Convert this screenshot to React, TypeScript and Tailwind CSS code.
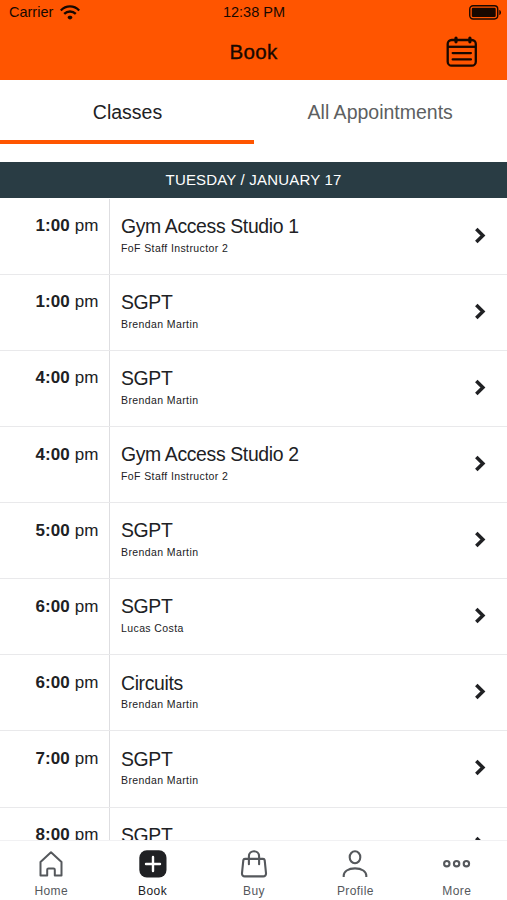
import React from "react";

const classes = [
  { time: "1:00", name: "Gym Access Studio 1", staff: "FoF Staff Instructor 2" },
  { time: "1:00", name: "SGPT", staff: "Brendan Martin" },
  { time: "4:00", name: "SGPT", staff: "Brendan Martin" },
  { time: "4:00", name: "Gym Access Studio 2", staff: "FoF Staff Instructor 2" },
  { time: "5:00", name: "SGPT", staff: "Brendan Martin" },
  { time: "6:00", name: "SGPT", staff: "Lucas Costa" },
  { time: "6:00", name: "Circuits", staff: "Brendan Martin" },
  { time: "7:00", name: "SGPT", staff: "Brendan Martin" },
  { time: "8:00", name: "SGPT", staff: "Brendan Martin" },
];

function WifiIcon() {
  return (
    <svg width="20" height="15" viewBox="0 0 20 15" fill="none" stroke="currentColor" strokeWidth="2.3">
      <path d="M.8 5.5C6 .1 14 .1 19.2 5.5" />
      <path d="M4.2 8.9c3.3-3.2 8.3-3.2 11.6 0" />
      <path d="M7.6 12.2c.7-1.9 4.1-1.9 4.8 0 .2.8-1.5 2.3-2.4 2.3s-2.6-1.5-2.4-2.3Z" fill="currentColor" stroke="none" />
    </svg>
  );
}

function BatteryIcon() {
  return (
    <svg width="33" height="15" viewBox="0 0 33 15" fill="none">
      <rect x=".75" y=".75" width="28" height="13.2" rx="3.4" stroke="currentColor" strokeWidth="1.4" />
      <rect x="2.8" y="2.8" width="23.9" height="9.1" rx="1.2" fill="currentColor" />
      <path d="M30.3 5c2.3.5 2.3 4.5 0 5Z" fill="currentColor" />
    </svg>
  );
}

function CalendarIcon() {
  return (
    <svg width="32" height="32" viewBox="0 0 32 32" fill="none" stroke="currentColor" strokeWidth="2.3" strokeLinecap="round">
      <rect x="1.7" y="4" width="28.1" height="25.7" rx="4" />
      <path d="M2 10.8h27.6" strokeLinecap="butt" />
      <path d="M10 2v3.8M23.9 2v3.8" strokeWidth="3.2" />
      <path d="M6.7 17.1h18.2M6.7 23.4h18.2" />
    </svg>
  );
}

function HomeIcon() {
  return (
    <svg width="28" height="28" viewBox="0 0 28 28" fill="none" stroke="currentColor" strokeWidth="2" strokeLinejoin="round">
      <path d="M3.5 12 14 2.2 24.5 12v13.6h-6.7v-5.8a1.3 1.3 0 0 0-1.3-1.3h-5a1.3 1.3 0 0 0-1.3 1.3v5.8H3.5Z" />
    </svg>
  );
}

function BookIcon() {
  return (
    <svg width="28" height="28" viewBox="0 0 28 28" fill="none">
      <rect x=".3" y=".3" width="27.2" height="27.2" rx="7.5" fill="currentColor" />
      <path d="M14 7v14M7 14h14" stroke="white" strokeWidth="2.4" strokeLinecap="round" />
    </svg>
  );
}

function BuyIcon() {
  return (
    <svg width="28" height="28" viewBox="0 0 28 28" fill="none" stroke="currentColor" strokeWidth="2.1" strokeLinecap="round" strokeLinejoin="round">
      <path d="M5 8.9h18a1.7 1.7 0 0 1 1.7 1.4l1.3 12.8c.2 1.9-1 3.3-2.8 3.3H4.8c-1.8 0-3-1.4-2.8-3.3l1.3-12.8A1.7 1.7 0 0 1 5 8.9Z" />
      <path d="M8.9 14.2V6.4c0-6.8 10.2-6.8 10.2 0v7.8" />
    </svg>
  );
}

function ProfileIcon() {
  return (
    <svg width="28" height="28" viewBox="0 0 28 28" fill="none" stroke="currentColor" strokeWidth="2.1">
      <ellipse cx="14" cy="7.2" rx="5.3" ry="6" />
      <path d="M2.7 27v-1.4c0-4 4.3-7.2 11.3-7.2s11.3 3.2 11.3 7.2V27" />
    </svg>
  );
}

function MoreIcon() {
  return (
    <svg width="28" height="28" viewBox="0 0 28 28" fill="none" stroke="currentColor" strokeWidth="2.1">
      <circle cx="3.8" cy="13.7" r="2.7" />
      <circle cx="13.6" cy="13.7" r="2.7" />
      <circle cx="23.4" cy="13.7" r="2.7" />
    </svg>
  );
}

const tabs = [
  { label: "Home", Icon: HomeIcon },
  { label: "Book", Icon: BookIcon },
  { label: "Buy", Icon: BuyIcon },
  { label: "Profile", Icon: ProfileIcon },
  { label: "More", Icon: MoreIcon },
];

function ClassRow({ time, name, staff }: { time: string; name: string; staff: string }) {
  return (
    <li className="flex h-[76.14px] shrink-0 border-b border-[#e9e9eb]">
      <div className="w-[109.5px] shrink-0 border-r border-[#dedee1] pt-[16.6px] pr-[10px] text-right text-[17px] leading-[22px] tracking-[0.08px]">
        <span className="font-bold">{time}</span> pm
      </div>
      <div className="flex-1 pt-[15.2px] pl-[11.5px]">
        <h2 className="text-[19.4px] leading-6 tracking-[-0.35px]">{name}</h2>
        <p className="mt-[1.8px] text-[10.5px] leading-4 tracking-[0.4px]">{staff}</p>
      </div>
      <svg className="mt-[28px] mr-[20px] shrink-0" width="13" height="17" viewBox="0 0 13 17" fill="none" stroke="currentColor" strokeWidth="3.5">
        <path d="m2.3 2 6.6 6.5L2.3 15" />
      </svg>
    </li>
  );
}

export default function App() {
  return (
    <div className="flex h-[900px] w-[507px] flex-col overflow-hidden bg-white font-['Liberation_Sans',Arial,sans-serif] text-[#202124]">
      <header className="h-[80.4px] shrink-0 bg-[#ff5500] text-[#180800]">
        <div className="grid h-[25px] grid-cols-3 items-center pr-[5px] pl-[9px] text-[14.5px]">
          <div className="flex items-center gap-[7px]">
            <span className="pt-px">Carrier</span>
            <WifiIcon />
          </div>
          <span className="pt-px pr-[3px] text-center">12:38 PM</span>
          <div className="flex justify-end">
            <BatteryIcon />
          </div>
        </div>
        <div className="grid h-[54px] grid-cols-[1fr_auto_1fr] items-center pr-[29px] pl-[29px]">
          <h1 className="col-start-2 text-[20.5px] tracking-[0.3px] [-webkit-text-stroke:0.35px_currentColor]">Book</h1>
          <div className="flex justify-end">
            <CalendarIcon />
          </div>
        </div>
      </header>
      <nav className="grid h-[63.6px] shrink-0 grid-cols-2 text-center text-[19.5px]">
        <button className="border-b-4 border-[#ff5500] pt-1 pl-[1.5px]">Classes</button>
        <button className="border-b-4 border-transparent pt-1 text-[#5d5f61]">All Appointments</button>
      </nav>
      <div className="mt-[18px] flex h-[36px] shrink-0 items-center justify-center bg-[#293c44] text-[15px] tracking-[0.18px] text-white">
        TUESDAY / JANUARY 17
      </div>
      <ul className="flex min-h-0 flex-1 flex-col overflow-hidden pt-[0.6px]">
        {classes.map((item, i) => (
          <ClassRow key={i} {...item} />
        ))}
      </ul>
      <footer className="grid h-[60px] shrink-0 grid-cols-5 border-t border-[#f1f1f3] pt-[9px]">
        {tabs.map(({ label, Icon }) => (
          <button
            key={label}
            className={label === "Book" ? "flex flex-col items-center pl-px text-[#202124]" : "flex flex-col items-center pl-px text-[#55585c]"}
          >
            <Icon />
            <span className="mt-[4px] text-[12px] leading-[18px] tracking-[0.4px]">{label}</span>
          </button>
        ))}
      </footer>
    </div>
  );
}
